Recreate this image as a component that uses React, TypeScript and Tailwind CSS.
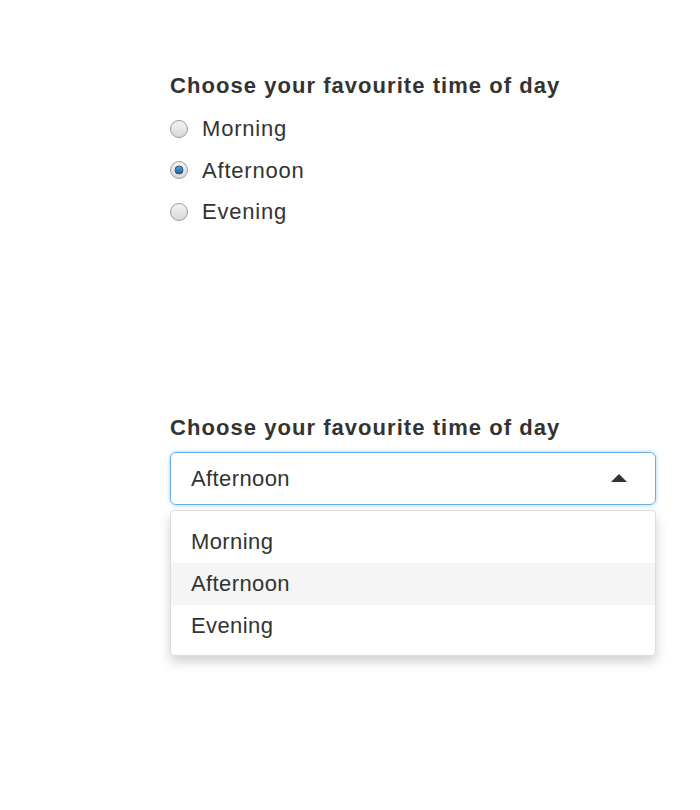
import React from "react";

const font = { fontFamily: '"Liberation Sans", Arial, Helvetica, sans-serif' };

function Radio({ checked }: { checked?: boolean }) {
  return (
    <span className="relative inline-block h-[18px] w-[18px] shrink-0 rounded-full border border-[#9a9a9a] bg-gradient-to-b from-[#f4f4f4] to-[#d8d8d8]">
      {checked && (
        <span className="absolute left-1/2 top-1/2 h-[9px] w-[9px] -translate-x-1/2 -translate-y-1/2 rounded-full bg-gradient-to-b from-[#5aa0d8] to-[#1f5f9a] border border-[#1d4e7c]" />
      )}
    </span>
  );
}

export default function App() {
  const opts = ["Morning", "Afternoon", "Evening"];
  return (
    <div className="min-h-[810px] w-[700px] bg-white text-[#333]" style={font}>
      <div className="pl-[170px] pr-[44px] pt-[72px]">
        <div className="text-[22px] font-bold leading-[28px] tracking-[1.05px]">Choose your favourite time of day</div>
        <div className="mt-[8px] flex flex-col">
          {opts.map((o, i) => (
            <label key={o} className="flex h-[41.5px] items-center gap-[14px] text-[22px] tracking-[0.8px]">
              <Radio checked={i === 1} />
              <span>{o}</span>
            </label>
          ))}
        </div>

        <div className="mt-[181px] text-[22px] font-bold leading-[28px] tracking-[1.05px]">Choose your favourite time of day</div>
        <div className="mt-[10px] flex h-[53px] items-center justify-between rounded-[6px] border border-[#66afe9] px-[20px] text-[22px] tracking-[0.4px] shadow-[0_0_4px_rgba(102,175,233,0.6)]">
          <span>Afternoon</span>
          <svg width="16" height="8" viewBox="0 0 16 8" className="mr-[8px]">
            <polygon points="0,8 8,0 16,8" fill="#333" />
          </svg>
        </div>
        <div className="mt-[5px] rounded-[4px] border border-[#dcdcdc] bg-white pt-[10px] pb-[8px] shadow-[0_6px_12px_rgba(0,0,0,0.18)]">
          {opts.map((o, i) => (
            <div key={o} className={`flex h-[42px] items-center px-[20px] text-[22px] tracking-[0.4px] ${i === 1 ? "bg-[#f5f5f5]" : ""}`}>
              {o}
            </div>
          ))}
        </div>
      </div>
    </div>
  );
}
